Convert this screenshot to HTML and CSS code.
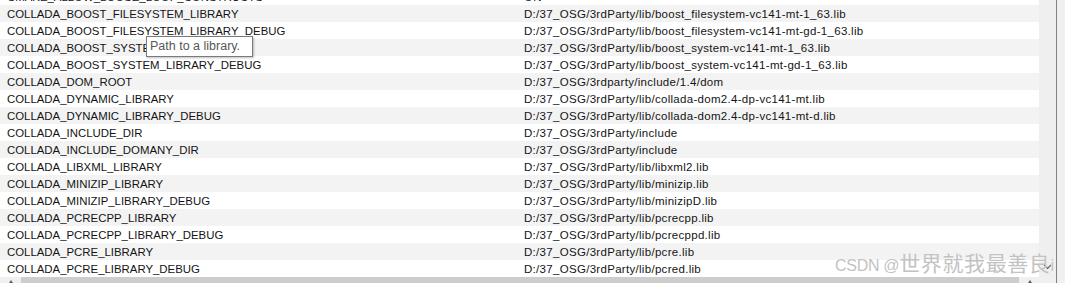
FILE: index.html
```html
<!DOCTYPE html>
<html>
<head>
<meta charset="utf-8">
<link rel="stylesheet" href="styles.css">
</head>
<body>
<div class="window">
  <div class="main">
    <div class="viewport">
      <div class="list">
        <div class="row"><span class="name">CMAKE_ALLOW_LOOSE_LOOP_CONSTRUCTS</span><span class="value">ON</span></div>
        <div class="row alt"><span class="name">COLLADA_BOOST_FILESYSTEM_LIBRARY</span><span class="value">D:/37_OSG/3rdParty/lib/boost_filesystem-vc141-mt-1_63.lib</span></div>
        <div class="row"><span class="name">COLLADA_BOOST_FILESYSTEM_LIBRARY_DEBUG</span><span class="value">D:/37_OSG/3rdParty/lib/boost_filesystem-vc141-mt-gd-1_63.lib</span></div>
        <div class="row alt"><span class="name">COLLADA_BOOST_SYSTEM_LIBRARY</span><span class="value">D:/37_OSG/3rdParty/lib/boost_system-vc141-mt-1_63.lib</span></div>
        <div class="row"><span class="name">COLLADA_BOOST_SYSTEM_LIBRARY_DEBUG</span><span class="value">D:/37_OSG/3rdParty/lib/boost_system-vc141-mt-gd-1_63.lib</span></div>
        <div class="row alt"><span class="name">COLLADA_DOM_ROOT</span><span class="value">D:/37_OSG/3rdparty/include/1.4/dom</span></div>
        <div class="row"><span class="name">COLLADA_DYNAMIC_LIBRARY</span><span class="value">D:/37_OSG/3rdParty/lib/collada-dom2.4-dp-vc141-mt.lib</span></div>
        <div class="row alt"><span class="name">COLLADA_DYNAMIC_LIBRARY_DEBUG</span><span class="value">D:/37_OSG/3rdParty/lib/collada-dom2.4-dp-vc141-mt-d.lib</span></div>
        <div class="row"><span class="name">COLLADA_INCLUDE_DIR</span><span class="value">D:/37_OSG/3rdParty/include</span></div>
        <div class="row alt"><span class="name">COLLADA_INCLUDE_DOMANY_DIR</span><span class="value">D:/37_OSG/3rdParty/include</span></div>
        <div class="row"><span class="name">COLLADA_LIBXML_LIBRARY</span><span class="value">D:/37_OSG/3rdParty/lib/libxml2.lib</span></div>
        <div class="row alt"><span class="name">COLLADA_MINIZIP_LIBRARY</span><span class="value">D:/37_OSG/3rdParty/lib/minizip.lib</span></div>
        <div class="row"><span class="name">COLLADA_MINIZIP_LIBRARY_DEBUG</span><span class="value">D:/37_OSG/3rdParty/lib/minizipD.lib</span></div>
        <div class="row alt"><span class="name">COLLADA_PCRECPP_LIBRARY</span><span class="value">D:/37_OSG/3rdParty/lib/pcrecpp.lib</span></div>
        <div class="row"><span class="name">COLLADA_PCRECPP_LIBRARY_DEBUG</span><span class="value">D:/37_OSG/3rdParty/lib/pcrecppd.lib</span></div>
        <div class="row alt"><span class="name">COLLADA_PCRE_LIBRARY</span><span class="value">D:/37_OSG/3rdParty/lib/pcre.lib</span></div>
        <div class="row"><span class="name">COLLADA_PCRE_LIBRARY_DEBUG</span><span class="value">D:/37_OSG/3rdParty/lib/pcred.lib</span></div>
      </div>
      <div class="tooltip">Path to a library.</div>
    </div>
    <div class="vscroll">
      <svg class="vdown" width="9" height="6" viewBox="0 0 9 6"><path d="M1 1 L4.5 4.5 L8 1" fill="none" stroke="#606060" stroke-width="1.2"/></svg>
    </div>
    <div class="hscroll">
      <div class="harrow"><svg width="4" height="3" viewBox="0 0 4 3"><path d="M0 3 L2 0 L4 3 Z" fill="#606060"/></svg></div>
      <div class="hthumb"></div>
      <div class="harrow"><svg width="4" height="3" viewBox="0 0 4 3"><path d="M0 3 L2 0 L4 3 Z" fill="#606060"/></svg></div>
    </div>
  </div>
  <div class="divider"></div>
  <div class="side"></div>
  <div class="watermark">CSDN @<span class="wm-cjk">世界就我最善良</span>i</div>
</div>
</body>
</html>
```
FILE: styles.css
```css
html, body {
  margin: 0;
  padding: 0;
  background: #ffffff;
}
.window {
  position: relative;
  width: 1065px;
  height: 283px;
  overflow: hidden;
  display: flex;
  font-family: "Liberation Sans", Arial, "Noto Sans CJK SC", sans-serif;
}
.main {
  width: 1056px;
  height: 283px;
  display: grid;
  grid-template-columns: 1039px 17px;
  grid-template-rows: 277px 6px;
}
.viewport {
  position: relative;
  overflow: hidden;
  background: #ffffff;
}
.list {
  margin-top: -12px;
}
.row {
  display: grid;
  grid-template-columns: 517px 1fr;
  height: 17px;
  box-sizing: border-box;
  padding: 2px 0 0 7px;
  line-height: 14px;
  color: #141414;
  white-space: nowrap;
}
.row.alt {
  background: #f3f3f3;
}
.name {
  font-size: 11.4px;
}
.value {
  font-size: 11.5px;
  letter-spacing: 0.3px;
}
.tooltip {
  position: absolute;
  left: 146px;
  top: 36px;
  width: 107px;
  height: 21px;
  box-sizing: border-box;
  border: 1px solid #7a7a7a;
  background: #ffffff;
  color: #575757;
  font-size: 12.5px;
  line-height: 19px;
  padding-left: 3px;
  box-shadow: 1px 1px 2px rgba(0,0,0,0.25);
  white-space: nowrap;
}
.vscroll {
  background: #efefef;
  display: flex;
  flex-direction: column;
  justify-content: flex-end;
  align-items: center;
  padding-bottom: 7px;
  box-sizing: border-box;
}
.hscroll {
  grid-column: 1 / 3;
  background: #f0f0f0;
  display: flex;
  align-items: flex-start;
}
.harrow {
  width: 21px;
  display: flex;
  justify-content: center;
  padding-top: 3px;
}
.hthumb {
  width: 998px;
  height: 6px;
  background: #cdcdcd;
}
.divider {
  width: 1px;
  height: 283px;
  background: #80808e;
}
.side {
  flex: 1;
  background: #f0f0f0;
}
.watermark {
  position: absolute;
  left: 835px;
  top: 252px;
  font-family: "Liberation Sans", Arial, "Noto Sans CJK SC", sans-serif;
  font-size: 16px;
  line-height: 24px;
  letter-spacing: -0.3px;
  color: #c2c2c2;
  text-shadow: 0 0 1px #ffffff;
  white-space: nowrap;
}
.wm-cjk {
  font-size: 21px;
  letter-spacing: 0.6px;
}
```
